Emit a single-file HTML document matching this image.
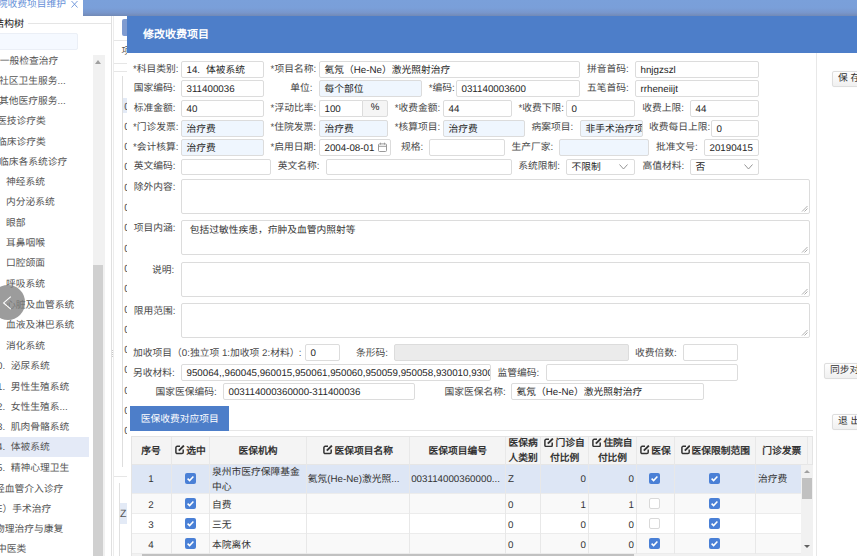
<!DOCTYPE html><html lang="zh-CN"><head><meta charset="utf-8"><style>
*{box-sizing:border-box;margin:0;padding:0}
html,body{width:857px;height:556px;overflow:hidden;background:#fff;position:relative;font-family:"Liberation Sans",sans-serif;font-size:9.75px;color:#333;text-rendering:geometricPrecision}
div{position:absolute}
.t{height:16px;line-height:16px;white-space:nowrap}
.inp{border:1px solid #dcdcdc;border-radius:2px;background:#fff;padding-left:4.5px;white-space:nowrap;overflow:hidden;color:#262626}
.inp.ro{background:#eff6fe}
.inp.dis{background:#ebebeb}
.ta{border:1px solid #dcdcdc;border-radius:2px;background:#fff}
.btn{border:1px solid #dedede;border-radius:2px;background:linear-gradient(#fefefe,#f0f0f0);box-shadow:0 0 1px rgba(0,0,0,0.08);color:#333;white-space:nowrap;overflow:hidden;padding-left:5px}
.cb{width:11px;height:11px;border-radius:2px;background:#4a80d6}
.cbe{width:11px;height:11px;border-radius:2px;border:1px solid #d9d9d9;background:#fff}
.hd{font-weight:bold;color:#333;text-align:center;white-space:nowrap}
</style></head><body>

<div class="" style="left:83px;top:0px;width:774px;height:16px;background:linear-gradient(#7aa0da 0%,#7a9fd9 50%,#7896cb 80%,#7189b6 100%);"></div>
<div class="t" style="left:-12px;top:-3.3px;color:#6690d8;">医院收费项目维护</div>
<svg style="position:absolute;left:70px;top:0" width="9" height="9" viewBox="0 0 9 9"><path d="M1.5 1L7.5 7.5M7.5 1L1.5 7.5" stroke="#6690d8" stroke-width="0.9" fill="none"/></svg>
<div class="t" style="left:-6px;top:17px;color:#222;font-size:10px;">结构树</div>
<div class="" style="left:28px;top:23px;width:83px;height:1px;background:#e5e5e5;"></div>
<div class="" style="left:111px;top:16px;width:1px;height:540px;background:#e0e0e0;"></div>
<div class="" style="left:113px;top:16px;width:1px;height:540px;background:#ececec;"></div>
<div class="" style="left:-4px;top:33px;width:81.5px;height:16.5px;background:#f5f9ff;border:1px solid #ebeff6;border-radius:2px;"></div>
<div class="" style="left:0px;top:437px;width:89px;height:20px;background:#e4eaf7;"></div>
<div class="t" style="left:-0.3px;top:54.3px;color:#555;">一般检查治疗</div>
<div class="t" style="left:-1px;top:74.3px;color:#555;">社区卫生服务...</div>
<div class="t" style="left:-1px;top:94.3px;color:#555;">其他医疗服务...</div>
<div class="t" style="left:-3px;top:114.3px;color:#555;">医技诊疗类</div>
<div class="t" style="left:-3px;top:135.3px;color:#555;">临床诊疗类</div>
<div class="t" style="left:-1px;top:155.3px;color:#555;">临床各系统诊疗</div>
<div class="t" style="left:6px;top:175.3px;color:#555;">神经系统</div>
<div class="t" style="left:6px;top:195.3px;color:#555;">内分泌系统</div>
<div class="t" style="left:6px;top:215.8px;color:#555;">眼部</div>
<div class="t" style="left:6px;top:236.3px;color:#555;">耳鼻咽喉</div>
<div class="t" style="left:6px;top:256.3px;color:#555;">口腔颌面</div>
<div class="t" style="left:6px;top:277.3px;color:#555;">呼吸系统</div>
<div class="t" style="left:6px;top:298.0px;color:#555;">心脏及血管系统</div>
<div class="t" style="left:6px;top:318.0px;color:#555;">血液及淋巴系统</div>
<div class="t" style="left:6px;top:339.0px;color:#555;">消化系统</div>
<div class="t" style="left:-3px;top:359.0px;color:#555;">0.<span style="margin-left:5.6px"></span>泌尿系统</div>
<div class="t" style="left:-3px;top:379.5px;color:#555;">1.<span style="margin-left:5.6px"></span>男性生殖系统</div>
<div class="t" style="left:-3px;top:399.5px;color:#555;">2.<span style="margin-left:5.6px"></span>女性生殖系...</div>
<div class="t" style="left:-3px;top:420.0px;color:#555;">3.<span style="margin-left:5.6px"></span>肌肉骨骼系统</div>
<div class="t" style="left:-3px;top:440.0px;color:#555;">4.<span style="margin-left:5.6px"></span>体被系统</div>
<div class="t" style="left:-3px;top:460.5px;color:#555;">5.<span style="margin-left:5.6px"></span>精神心理卫生</div>
<div class="t" style="left:-5px;top:481.5px;color:#555;">经血管介入诊疗</div>
<div class="t" style="left:-4px;top:501.5px;color:#555;">E）手术治疗</div>
<div class="t" style="left:-5px;top:522.0px;color:#555;">物理治疗与康复</div>
<div class="t" style="left:-3px;top:542.0px;color:#555;">中医类</div>
<div class="" style="left:92.5px;top:55px;width:12.0px;height:501px;background:#f1f1f1;"></div>
<div class="" style="left:93px;top:265px;width:10.299999999999997px;height:291px;background:#d0d0d0;"></div>
<div style="left:95px;top:60px;width:0;height:0;border-left:3.5px solid transparent;border-right:3.5px solid transparent;border-bottom:4px solid #a0a0a0"></div>
<div style="left:-9.4px;top:285.4px;width:34.6px;height:34.6px;border-radius:50%;background:rgba(128,128,128,0.78)"></div>
<svg style="position:absolute;left:0;top:294px" width="14" height="18" viewBox="0 0 14 18"><polyline points="10.8,2.6 3.6,8.9 10.8,15.2" fill="none" stroke="#fff" stroke-width="1.1"/></svg>
<div class="" style="left:122px;top:19px;width:18px;height:16.5px;background:#7f9bd0;border-radius:2px;"></div>
<div class="" style="left:114px;top:39.5px;width:13px;height:1.0px;background:#e6e6e6;"></div>
<div class="t" style="left:121.5px;top:44px;color:#555;">项</div>
<div class="" style="left:114px;top:63px;width:13px;height:1px;background:#e6e6e6;"></div>
<div class="" style="left:114px;top:71px;width:13px;height:1px;background:#e6e6e6;"></div>
<div class="" style="left:122px;top:76px;width:1px;height:390.5px;background:#dedede;"></div>
<div class="" style="left:123px;top:98px;width:4px;height:15px;background:#e3eaf6;"></div>
<div class="t" style="left:124.2px;top:98.5px;color:#555;font-size:10.5px;">0</div>
<div class="t" style="left:124.2px;top:118.8px;color:#555;font-size:10.5px;">0</div>
<div class="t" style="left:124.2px;top:139.1px;color:#555;font-size:10.5px;">0</div>
<div class="t" style="left:124.2px;top:159.4px;color:#555;font-size:10.5px;">0</div>
<div class="t" style="left:124.2px;top:179.7px;color:#555;font-size:10.5px;">0</div>
<div class="t" style="left:124.2px;top:200.0px;color:#555;font-size:10.5px;">0</div>
<div class="t" style="left:124.2px;top:220.3px;color:#555;font-size:10.5px;">0</div>
<div class="t" style="left:124.2px;top:240.6px;color:#555;font-size:10.5px;">0</div>
<div class="t" style="left:124.2px;top:260.9px;color:#555;font-size:10.5px;">0</div>
<div class="t" style="left:124.2px;top:281.20000000000005px;color:#555;font-size:10.5px;">0</div>
<div class="t" style="left:124.2px;top:301.5px;color:#555;font-size:10.5px;">0</div>
<div class="t" style="left:124.2px;top:321.8px;color:#555;font-size:10.5px;">0</div>
<div class="t" style="left:124.2px;top:342.1px;color:#555;font-size:10.5px;">0</div>
<div class="t" style="left:124.2px;top:362.40000000000003px;color:#555;font-size:10.5px;">0</div>
<div class="t" style="left:124.2px;top:382.7px;color:#555;font-size:10.5px;">0</div>
<div class="t" style="left:124.2px;top:403.0px;color:#555;font-size:10.5px;">0</div>
<div class="t" style="left:124.2px;top:423.3px;color:#555;font-size:10.5px;">0</div>
<div class="" style="left:114px;top:475.5px;width:13px;height:1.0px;background:#e6e6e6;"></div>
<div class="" style="left:118.5px;top:483px;width:1.0px;height:73px;background:#e0e0e0;"></div>
<div class="" style="left:119.5px;top:503px;width:7.5px;height:21px;background:#e3eaf6;"></div>
<div class="t" style="left:120px;top:505.5px;color:#555;font-size:10.5px;">Z</div>
<div class="" style="left:112.2px;top:350px;width:1.0px;height:1px;background:#c8c8c8;"></div>
<div class="" style="left:112.2px;top:352px;width:1.0px;height:1px;background:#c8c8c8;"></div>
<div class="" style="left:112.2px;top:354px;width:1.0px;height:1px;background:#c8c8c8;"></div>
<div class="" style="left:112.2px;top:356px;width:1.0px;height:1px;background:#c8c8c8;"></div>
<div class="" style="left:126.5px;top:15.5px;width:730.5px;height:540.5px;background:#fff;"></div>
<div class="" style="left:126.5px;top:15.5px;width:730.5px;height:37.0px;background:#4d7ec9;"></div>
<div class="t" style="left:143px;top:26.5px;color:#fff;font-size:11px;font-weight:600;">修改收费项目</div>
<div class="" style="left:816px;top:52.5px;width:1px;height:503.5px;background:#e8e8e8;"></div>
<div class="btn" style="left:832px;top:71px;width:40px;height:16px;line-height:14px">保 存</div>
<div class="btn" style="left:824px;top:362.5px;width:48px;height:16px;line-height:14px">同步对</div>
<div class="btn" style="left:832px;top:414px;width:40px;height:16px;line-height:14px">退 出</div>
<div class="t" style="left:132.9px;top:61.6px;color:#484848;">*科目类别:</div>
<div class="inp" style="left:181px;top:61px;width:83px;height:17px;line-height:15px;padding-top:0.8px;">14.<span style="margin-left:6px"></span>体被系统</div>
<div class="t" style="left:270.6px;top:61.6px;color:#484848;">*项目名称:</div>
<div class="inp" style="left:319px;top:61px;width:261px;height:17px;line-height:15px;padding-top:0.8px;">氦氖（He-Ne）激光照射治疗</div>
<div class="t" style="left:586.9px;top:61.6px;color:#484848;">拼音首码:</div>
<div class="inp" style="left:635px;top:61px;width:124px;height:17px;line-height:15px;padding-top:0.8px;">hnjgzszl</div>
<div class="t" style="left:133.7px;top:81.10000000000001px;color:#484848;">国家编码:</div>
<div class="inp" style="left:181px;top:80px;width:83px;height:17px;line-height:15px;padding-top:0.8px;">311400036</div>
<div class="t" style="left:290.3px;top:81.10000000000001px;color:#484848;">单位:</div>
<div class="inp ro" style="left:319px;top:80px;width:103px;height:17px;line-height:15px;padding-top:0.8px;">每个部位</div>
<div class="t" style="left:428.8px;top:81.10000000000001px;color:#484848;">*编码:</div>
<div class="inp" style="left:456px;top:80px;width:124px;height:17px;line-height:15px;padding-top:0.8px;">031140003600</div>
<div class="t" style="left:586.9px;top:81.10000000000001px;color:#484848;">五笔首码:</div>
<div class="inp" style="left:635px;top:80px;width:124px;height:17px;line-height:15px;padding-top:0.8px;">rrheneiijt</div>
<div class="t" style="left:133.7px;top:100.5px;color:#484848;">标准金额:</div>
<div class="inp" style="left:181px;top:100px;width:83px;height:17px;line-height:15px;padding-top:0.8px;">40</div>
<div class="t" style="left:270.6px;top:100.5px;color:#484848;">*浮动比率:</div>
<div class="inp" style="left:319px;top:100px;width:43px;height:17px;line-height:15px;padding-top:0.8px;border-radius:2px 0 0 2px;border-right:none;">100</div>
<div class="inp" style="left:362px;top:100px;width:26px;height:17px;line-height:14.5px;background:#f5f5f5;text-align:center;padding:0;border-radius:0 2px 2px 0">%</div>
<div class="t" style="left:394.8px;top:100.5px;color:#484848;">*收费金额:</div>
<div class="inp" style="left:443px;top:100px;width:69px;height:17px;line-height:15px;padding-top:0.8px;">44</div>
<div class="t" style="left:518.4px;top:100.5px;color:#484848;">*收费下限:</div>
<div class="inp" style="left:566px;top:100px;width:69px;height:17px;line-height:15px;padding-top:0.8px;">0</div>
<div class="t" style="left:642.2px;top:100.5px;color:#484848;">收费上限:</div>
<div class="inp" style="left:690px;top:100px;width:69px;height:17px;line-height:15px;padding-top:0.8px;">44</div>
<div class="t" style="left:132.9px;top:120.10000000000001px;color:#484848;">*门诊发票:</div>
<div class="inp ro" style="left:181px;top:120px;width:83px;height:17px;line-height:15px;padding-top:0.8px;">治疗费</div>
<div class="t" style="left:270.4px;top:120.10000000000001px;color:#484848;">*住院发票:</div>
<div class="inp ro" style="left:319px;top:120px;width:69px;height:17px;line-height:15px;padding-top:0.8px;">治疗费</div>
<div class="t" style="left:394.8px;top:120.10000000000001px;color:#484848;">*核算项目:</div>
<div class="inp ro" style="left:443px;top:120px;width:82px;height:17px;line-height:15px;padding-top:0.8px;">治疗费</div>
<div class="t" style="left:531.5px;top:120.10000000000001px;color:#484848;">病案项目:</div>
<div class="inp ro" style="left:580px;top:120px;width:63px;height:17px;line-height:15px;padding-top:0.8px;">非手术治疗项目</div>
<div class="t" style="left:649.1px;top:120.10000000000001px;color:#484848;">收费每日上限:</div>
<div class="inp" style="left:711px;top:120px;width:48px;height:17px;line-height:15px;padding-top:0.8px;">0</div>
<div class="t" style="left:132.9px;top:139.5px;color:#484848;">*会计核算:</div>
<div class="inp ro" style="left:181px;top:139px;width:83px;height:17px;line-height:15px;padding-top:0.8px;">治疗费</div>
<div class="t" style="left:270.4px;top:139.5px;color:#484848;">*启用日期:</div>
<div class="inp" style="left:319px;top:139px;width:72px;height:17px;line-height:15px;padding-top:0.8px;">2004-08-01</div>
<svg style="position:absolute;left:377px;top:142px" width="11" height="11" viewBox="0 0 11 11"><rect x="1.5" y="1.9" width="8" height="7.6" rx="1" fill="none" stroke="#9a9a9a" stroke-width="1"/><line x1="1.5" y1="4.3" x2="9.5" y2="4.3" stroke="#9a9a9a" stroke-width="1"/><line x1="3.5" y1="0.7" x2="3.5" y2="2.6" stroke="#9a9a9a" stroke-width="1"/><line x1="7.5" y1="0.7" x2="7.5" y2="2.6" stroke="#9a9a9a" stroke-width="1"/></svg>
<div class="t" style="left:400.9px;top:139.5px;color:#484848;">规格:</div>
<div class="inp" style="left:429px;top:139px;width:76px;height:17px;line-height:15px;padding-top:0.8px;"></div>
<div class="t" style="left:511.5px;top:139.5px;color:#484848;">生产厂家:</div>
<div class="inp ro" style="left:559px;top:139px;width:90px;height:17px;line-height:15px;padding-top:0.8px;"></div>
<div class="t" style="left:656.1px;top:139.5px;color:#484848;">批准文号:</div>
<div class="inp" style="left:704px;top:139px;width:55px;height:17px;line-height:15px;padding-top:0.8px;">20190415</div>
<div class="t" style="left:133.7px;top:159.0px;color:#484848;">英文编码:</div>
<div class="inp" style="left:181px;top:159px;width:90px;height:16px;line-height:14px;padding-top:0.8px;"></div>
<div class="t" style="left:277.8px;top:159.0px;color:#484848;">英文名称:</div>
<div class="inp" style="left:326px;top:159px;width:186px;height:16px;line-height:14px;padding-top:0.8px;"></div>
<div class="t" style="left:518.2px;top:159.0px;color:#484848;">系统限制:</div>
<div class="inp" style="left:566px;top:159px;width:69px;height:16px;line-height:14px;padding-top:0.8px;">不限制</div>
<div class="t" style="left:642.4px;top:159.0px;color:#484848;">高值材料:</div>
<div class="inp" style="left:690px;top:159px;width:69px;height:16px;line-height:14px;padding-top:0.8px;">否</div>
<svg style="position:absolute;left:619.4px;top:164.10000000000002px" width="9" height="6" viewBox="0 0 9 6"><polyline points="0.5,0.5 4.5,5 8.5,0.5" fill="none" stroke="#888" stroke-width="0.9"/></svg>
<svg style="position:absolute;left:743.7px;top:164.10000000000002px" width="9" height="6" viewBox="0 0 9 6"><polyline points="0.5,0.5 4.5,5 8.5,0.5" fill="none" stroke="#888" stroke-width="0.9"/></svg>
<div class="t" style="left:133.7px;top:179.6px;color:#484848;">除外内容:</div>
<div class="ta" style="left:181.2px;top:178.6px;width:628.5px;height:35.2px"></div>
<svg style="position:absolute;left:801px;top:204.6px" width="7" height="7" viewBox="0 0 7 7"><line x1="1" y1="6.5" x2="6.5" y2="1" stroke="#999" stroke-width="0.8"/><line x1="3.5" y1="6.5" x2="6.5" y2="3.5" stroke="#999" stroke-width="0.8"/></svg>
<div class="t" style="left:133.7px;top:221.0px;color:#484848;">项目内涵:</div>
<div class="ta" style="left:181.2px;top:220px;width:628.5px;height:35.2px"></div>
<div class="t" style="left:189.8px;top:222.6px;">包括过敏性疾患，疖肿及血管内照射等</div>
<svg style="position:absolute;left:801px;top:246px" width="7" height="7" viewBox="0 0 7 7"><line x1="1" y1="6.5" x2="6.5" y2="1" stroke="#999" stroke-width="0.8"/><line x1="3.5" y1="6.5" x2="6.5" y2="3.5" stroke="#999" stroke-width="0.8"/></svg>
<div class="t" style="left:152.0px;top:262.6px;color:#484848;">说明:</div>
<div class="ta" style="left:181.2px;top:261.6px;width:628.5px;height:35.2px"></div>
<svg style="position:absolute;left:801px;top:287.6px" width="7" height="7" viewBox="0 0 7 7"><line x1="1" y1="6.5" x2="6.5" y2="1" stroke="#999" stroke-width="0.8"/><line x1="3.5" y1="6.5" x2="6.5" y2="3.5" stroke="#999" stroke-width="0.8"/></svg>
<div class="t" style="left:133.7px;top:304.0px;color:#484848;">限用范围:</div>
<div class="ta" style="left:181.2px;top:303px;width:628.5px;height:35.2px"></div>
<svg style="position:absolute;left:801px;top:329px" width="7" height="7" viewBox="0 0 7 7"><line x1="1" y1="6.5" x2="6.5" y2="1" stroke="#999" stroke-width="0.8"/><line x1="3.5" y1="6.5" x2="6.5" y2="3.5" stroke="#999" stroke-width="0.8"/></svg>
<div class="t" style="left:133.1px;top:345.8px;color:#484848;">加收项目（0:独立项 1:加收项 2:材料）</div>
<div class="t" style="left:298.8px;top:345.8px;color:#484848;">:</div>
<div class="inp" style="left:305px;top:344px;width:35px;height:17px;line-height:15px;padding-top:0.8px;">0</div>
<div class="t" style="left:356.0px;top:345.8px;color:#484848;">条形码:</div>
<div class="inp dis" style="left:394px;top:344px;width:235px;height:17px;line-height:15px;padding-top:0.8px;"></div>
<div class="t" style="left:635.0px;top:345.8px;color:#484848;">收费倍数:</div>
<div class="inp" style="left:683px;top:344px;width:55px;height:17px;line-height:15px;padding-top:0.8px;"></div>
<div class="t" style="left:133.1px;top:365.59999999999997px;color:#484848;">另收材料:</div>
<div class="inp" style="left:181px;top:364px;width:310px;height:17px;line-height:15px;padding-top:0.8px;">950064,,960045,960015,950061,950060,950059,950058,930010,930015</div>
<div class="t" style="left:497.6px;top:365.59999999999997px;color:#484848;">监管编码:</div>
<div class="inp" style="left:546px;top:364px;width:192px;height:17px;line-height:15px;padding-top:0.8px;"></div>
<div class="t" style="left:155.5px;top:385.0px;color:#484848;">国家医保编码:</div>
<div class="inp" style="left:223px;top:383px;width:192px;height:17px;line-height:15px;padding-top:0.8px;">003114000360000-311400036</div>
<div class="t" style="left:444.5px;top:385.0px;color:#484848;">国家医保名称:</div>
<div class="inp" style="left:511px;top:383px;width:193px;height:17px;line-height:15px;padding-top:0.8px;">氦氖（He-Ne）激光照射治疗</div>
<div class="" style="left:129.8px;top:430.3px;width:683.7px;height:1.0px;background:#e6e6e6;"></div>
<div class="" style="left:129.8px;top:406px;width:99.1px;height:25px;background:#4d7ec9;"></div>
<div class="t" style="left:140.7px;top:412.3px;color:#fff;">医保收费对应项目</div>
<div class="" style="left:130.5px;top:435.5px;width:682.8px;height:120.5px;border:1px solid #e4e4e4;border-bottom:none;"></div>
<div class="" style="left:131.5px;top:436.5px;width:680.8px;height:27.5px;background:#f4f4f4;"></div>
<div class="" style="left:131.5px;top:464px;width:680.8px;height:1px;background:#e6e6e6;"></div>
<div class="" style="left:131.5px;top:465px;width:669.5px;height:28.19999999999999px;background:#dde6f5;"></div>
<div class="" style="left:131.5px;top:493.5px;width:669.5px;height:20.0px;background:#f9f9f9;"></div>
<div class="" style="left:131.5px;top:533.5px;width:669.5px;height:19.5px;background:#f9f9f9;"></div>
<div class="" style="left:131.5px;top:493.2px;width:669.5px;height:1.0px;background:#ececec;"></div>
<div class="" style="left:131.5px;top:513.3px;width:669.5px;height:1.0px;background:#ececec;"></div>
<div class="" style="left:131.5px;top:533.4px;width:669.5px;height:1.0px;background:#ececec;"></div>
<div class="" style="left:131.5px;top:553px;width:669.5px;height:1px;background:#ececec;"></div>
<div class="" style="left:171.0px;top:436.5px;width:1.0px;height:119.5px;background:#e8e8e8;"></div>
<div class="" style="left:209.0px;top:436.5px;width:1.0px;height:119.5px;background:#e8e8e8;"></div>
<div class="" style="left:305.9px;top:436.5px;width:1.0px;height:119.5px;background:#e8e8e8;"></div>
<div class="" style="left:409.1px;top:436.5px;width:1.0px;height:119.5px;background:#e8e8e8;"></div>
<div class="" style="left:505.1px;top:436.5px;width:1.0px;height:119.5px;background:#e8e8e8;"></div>
<div class="" style="left:540.1px;top:436.5px;width:1.0px;height:119.5px;background:#e8e8e8;"></div>
<div class="" style="left:588.0px;top:436.5px;width:1.0px;height:119.5px;background:#e8e8e8;"></div>
<div class="" style="left:635.8px;top:436.5px;width:1.0px;height:119.5px;background:#e8e8e8;"></div>
<div class="" style="left:673.5px;top:436.5px;width:1.0px;height:119.5px;background:#e8e8e8;"></div>
<div class="" style="left:755.3px;top:436.5px;width:1.0px;height:119.5px;background:#e8e8e8;"></div>
<div class="" style="left:806.8px;top:436.5px;width:1.0px;height:119.5px;background:#e8e8e8;"></div>
<div class="hd" style="left:130.5px;top:443.8px;width:41.0px;height:16px;line-height:16px">序号</div>
<div class="hd" style="left:171.5px;top:443.8px;width:38.0px;height:16px;line-height:16px"><svg width="9.5" height="9.5" viewBox="0 0 9.5 9.5" style="vertical-align:-1px;margin-right:1.5px"><path d="M5 1.3H2.2A1.3 1.3 0 0 0 0.9 2.6V7.3A1.3 1.3 0 0 0 2.2 8.6H6.9A1.3 1.3 0 0 0 8.2 7.3V4.5" fill="none" stroke="#333" stroke-width="1.5"/><path d="M3.8 5.7L8.9 0.6" stroke="#333" stroke-width="1.9"/></svg>选中</div>
<div class="hd" style="left:209.5px;top:443.8px;width:97.10000000000002px;height:16px;line-height:16px">医保机构</div>
<div class="hd" style="left:306.6px;top:443.8px;width:103.19999999999999px;height:16px;line-height:16px"><svg width="9.5" height="9.5" viewBox="0 0 9.5 9.5" style="vertical-align:-1px;margin-right:1.5px"><path d="M5 1.3H2.2A1.3 1.3 0 0 0 0.9 2.6V7.3A1.3 1.3 0 0 0 2.2 8.6H6.9A1.3 1.3 0 0 0 8.2 7.3V4.5" fill="none" stroke="#333" stroke-width="1.5"/><path d="M3.8 5.7L8.9 0.6" stroke="#333" stroke-width="1.9"/></svg>医保项目名称</div>
<div class="hd" style="left:409.8px;top:443.8px;width:95.80000000000001px;height:16px;line-height:16px">医保项目编号</div>
<div class="hd" style="left:505.6px;top:436.2px;width:35.0px;height:28px;line-height:15.2px;padding-top:0px">医保病<br>人类别</div>
<div class="hd" style="left:540.6px;top:436.2px;width:47.89999999999998px;height:28px;line-height:15.2px;padding-top:0px"><svg width="9.5" height="9.5" viewBox="0 0 9.5 9.5" style="vertical-align:-1px;margin-right:1.5px"><path d="M5 1.3H2.2A1.3 1.3 0 0 0 0.9 2.6V7.3A1.3 1.3 0 0 0 2.2 8.6H6.9A1.3 1.3 0 0 0 8.2 7.3V4.5" fill="none" stroke="#333" stroke-width="1.5"/><path d="M3.8 5.7L8.9 0.6" stroke="#333" stroke-width="1.9"/></svg>门诊自<br>付比例</div>
<div class="hd" style="left:588.5px;top:436.2px;width:48.0px;height:28px;line-height:15.2px;padding-top:0px"><svg width="9.5" height="9.5" viewBox="0 0 9.5 9.5" style="vertical-align:-1px;margin-right:1.5px"><path d="M5 1.3H2.2A1.3 1.3 0 0 0 0.9 2.6V7.3A1.3 1.3 0 0 0 2.2 8.6H6.9A1.3 1.3 0 0 0 8.2 7.3V4.5" fill="none" stroke="#333" stroke-width="1.5"/><path d="M3.8 5.7L8.9 0.6" stroke="#333" stroke-width="1.9"/></svg>住院自<br>付比例</div>
<div class="hd" style="left:636.5px;top:443.8px;width:38.0px;height:16px;line-height:16px"><svg width="9.5" height="9.5" viewBox="0 0 9.5 9.5" style="vertical-align:-1px;margin-right:1.5px"><path d="M5 1.3H2.2A1.3 1.3 0 0 0 0.9 2.6V7.3A1.3 1.3 0 0 0 2.2 8.6H6.9A1.3 1.3 0 0 0 8.2 7.3V4.5" fill="none" stroke="#333" stroke-width="1.5"/><path d="M3.8 5.7L8.9 0.6" stroke="#333" stroke-width="1.9"/></svg>医保</div>
<div class="hd" style="left:674.5px;top:443.8px;width:81.5px;height:16px;line-height:16px"><svg width="9.5" height="9.5" viewBox="0 0 9.5 9.5" style="vertical-align:-1px;margin-right:1.5px"><path d="M5 1.3H2.2A1.3 1.3 0 0 0 0.9 2.6V7.3A1.3 1.3 0 0 0 2.2 8.6H6.9A1.3 1.3 0 0 0 8.2 7.3V4.5" fill="none" stroke="#333" stroke-width="1.5"/><path d="M3.8 5.7L8.9 0.6" stroke="#333" stroke-width="1.9"/></svg>医保限制范围</div>
<div class="hd" style="left:756px;top:443.8px;width:51.299999999999955px;height:16px;line-height:16px">门诊发票</div>
<div class="t" style="left:130.5px;top:472.2px;width:41px;text-align:center">1</div>
<div class="cb" style="left:185.0px;top:472.5px"><svg width="11" height="11" viewBox="0 0 11 11"><polyline points="2.6,5.6 4.6,7.6 8.4,3.6" fill="none" stroke="#fff" stroke-width="1.5"/></svg></div>
<div style="left:212px;top:465.8px;line-height:14.7px;white-space:nowrap">泉州市医疗保障基金<br>中心</div>
<div class="t" style="left:307.8px;top:472.2px;">氦氖(He-Ne)激光照...</div>
<div class="t" style="left:411.2px;top:472.2px;">003114000360000...</div>
<div class="t" style="left:508px;top:472.2px;">Z</div>
<div class="t" style="left:541px;top:472.2px;width:45px;text-align:right">0</div>
<div class="t" style="left:589px;top:472.2px;width:45px;text-align:right">0</div>
<div class="cb" style="left:649.2px;top:472.5px"><svg width="11" height="11" viewBox="0 0 11 11"><polyline points="2.6,5.6 4.6,7.6 8.4,3.6" fill="none" stroke="#fff" stroke-width="1.5"/></svg></div>
<div class="cb" style="left:709.0px;top:472.5px"><svg width="11" height="11" viewBox="0 0 11 11"><polyline points="2.6,5.6 4.6,7.6 8.4,3.6" fill="none" stroke="#fff" stroke-width="1.5"/></svg></div>
<div class="t" style="left:758px;top:472.2px;">治疗费</div>
<div class="t" style="left:130.5px;top:497.5px;width:41px;text-align:center">2</div>
<div class="cb" style="left:185.0px;top:497.8px"><svg width="11" height="11" viewBox="0 0 11 11"><polyline points="2.6,5.6 4.6,7.6 8.4,3.6" fill="none" stroke="#fff" stroke-width="1.5"/></svg></div>
<div class="t" style="left:212px;top:497.5px;">自费</div>
<div class="t" style="left:508px;top:497.5px;">0</div>
<div class="t" style="left:541px;top:497.5px;width:45px;text-align:right">1</div>
<div class="t" style="left:589px;top:497.5px;width:45px;text-align:right">1</div>
<div class="cbe" style="left:649.2px;top:497.8px"></div>
<div class="cb" style="left:709.0px;top:497.8px"><svg width="11" height="11" viewBox="0 0 11 11"><polyline points="2.6,5.6 4.6,7.6 8.4,3.6" fill="none" stroke="#fff" stroke-width="1.5"/></svg></div>
<div class="t" style="left:130.5px;top:517.5px;width:41px;text-align:center">3</div>
<div class="cb" style="left:185.0px;top:517.8px"><svg width="11" height="11" viewBox="0 0 11 11"><polyline points="2.6,5.6 4.6,7.6 8.4,3.6" fill="none" stroke="#fff" stroke-width="1.5"/></svg></div>
<div class="t" style="left:212px;top:517.5px;">三无</div>
<div class="t" style="left:508px;top:517.5px;">0</div>
<div class="t" style="left:541px;top:517.5px;width:45px;text-align:right">0</div>
<div class="t" style="left:589px;top:517.5px;width:45px;text-align:right">0</div>
<div class="cbe" style="left:649.2px;top:517.8px"></div>
<div class="cb" style="left:709.0px;top:517.8px"><svg width="11" height="11" viewBox="0 0 11 11"><polyline points="2.6,5.6 4.6,7.6 8.4,3.6" fill="none" stroke="#fff" stroke-width="1.5"/></svg></div>
<div class="t" style="left:130.5px;top:537.5px;width:41px;text-align:center">4</div>
<div class="cb" style="left:185.0px;top:537.8px"><svg width="11" height="11" viewBox="0 0 11 11"><polyline points="2.6,5.6 4.6,7.6 8.4,3.6" fill="none" stroke="#fff" stroke-width="1.5"/></svg></div>
<div class="t" style="left:212px;top:537.5px;">本院离休</div>
<div class="t" style="left:508px;top:537.5px;">0</div>
<div class="t" style="left:541px;top:537.5px;width:45px;text-align:right">0</div>
<div class="t" style="left:589px;top:537.5px;width:45px;text-align:right">0</div>
<div class="cb" style="left:649.2px;top:537.8px"><svg width="11" height="11" viewBox="0 0 11 11"><polyline points="2.6,5.6 4.6,7.6 8.4,3.6" fill="none" stroke="#fff" stroke-width="1.5"/></svg></div>
<div class="cb" style="left:709.0px;top:537.8px"><svg width="11" height="11" viewBox="0 0 11 11"><polyline points="2.6,5.6 4.6,7.6 8.4,3.6" fill="none" stroke="#fff" stroke-width="1.5"/></svg></div>
<div class="" style="left:801px;top:465px;width:11.5px;height:91px;background:#f1f1f1;"></div>
<div class="" style="left:802px;top:478px;width:10px;height:21px;background:#c1c1c1;"></div>
<div style="left:803.5px;top:470px;width:0;height:0;border-left:3px solid transparent;border-right:3px solid transparent;border-bottom:3.5px solid #a0a0a0"></div>
<div style="left:803.5px;top:545px;width:0;height:0;border-left:3px solid transparent;border-right:3px solid transparent;border-top:3.5px solid #606060"></div>
<div class="" style="left:131.5px;top:553.5px;width:669.5px;height:2.5px;background:#f1f1f1;"></div>
<div class="" style="left:142px;top:553.8px;width:492px;height:2.2000000000000455px;background:#c1c1c1;"></div>
</body></html>
